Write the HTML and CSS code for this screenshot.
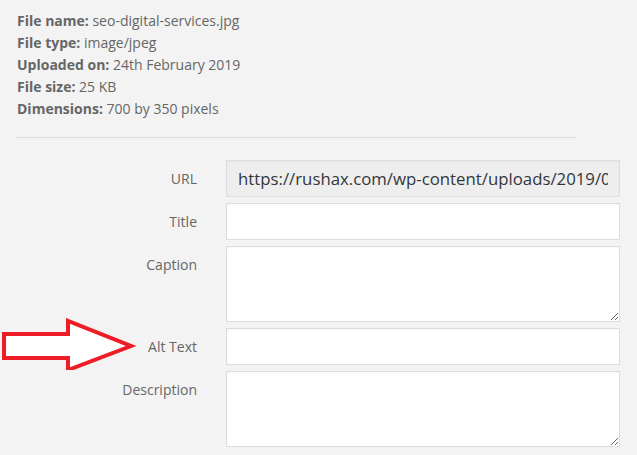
FILE: index.html
```html
<!DOCTYPE html>
<html>
<head>
<meta charset="utf-8">
<link rel="stylesheet" href="styles.css">
</head>
<body>
<div class="page">
  <div class="info">
    <div class="line"><strong>File name:</strong> seo-digital-services.jpg</div>
    <div class="line"><strong>File type:</strong> image/jpeg</div>
    <div class="line"><strong>Uploaded on:</strong> 24th February 2019</div>
    <div class="line"><strong>File size:</strong> 25 KB</div>
    <div class="line"><strong>Dimensions:</strong> 700 by 350 pixels</div>
  </div>
  <div class="divider"></div>
  <div class="form">
    <label class="label">URL</label>
    <input class="field readonly" type="text" readonly value="https://rushax.com/wp-content/uploads/2019/02/seo-digital-services.jpg">
    <label class="label">Title</label>
    <input class="field" type="text">
    <label class="label">Caption</label>
    <textarea class="field area"></textarea>
    <label class="label">Alt Text</label>
    <input class="field" type="text">
    <label class="label">Description</label>
    <textarea class="field area"></textarea>
  </div>
  <svg class="arrow" width="140" height="60" viewBox="0 310 140 60">
    <polygon points="4,334 68,334 68,321 131,346 68,370 68,358 4,358" fill="#ffffff" stroke="#ee1c25" stroke-width="4" stroke-linejoin="miter"/>
  </svg>
</div>
</body>
</html>
```
FILE: styles.css
```css
* { box-sizing: border-box; }
html, body {
  margin: 0;
  padding: 0;
  background: #f3f3f3;
}
.page {
  position: relative;
  width: 637px;
  height: 455px;
  overflow: hidden;
  font-family: "Open Sans", "Noto Sans", sans-serif;
  color: #666;
}
.info {
  padding: 10px 0 0 17px;
  font-size: 14px;
  line-height: 22px;
}
.info strong {
  font-weight: 700;
  color: #666;
}
.divider {
  margin: 17px 0 0 16px;
  width: 561px;
  border-top: 1px solid #dddddd;
}
.form {
  display: grid;
  grid-template-columns: 197px 394px;
  column-gap: 29px;
  row-gap: 6px;
  margin-top: 22px;
}
.label {
  text-align: right;
  font-size: 14px;
  line-height: 20px;
  padding-top: 9px;
  color: #666;
}
.field {
  display: block;
  width: 394px;
  height: 37px;
  margin: 0;
  border: 1px solid #dddddd;
  background: #ffffff;
  font-family: "Open Sans", "Noto Sans", sans-serif;
  font-size: 16.8px;
  color: #32373c;
  padding: 0 11px;
  outline: none;
  box-shadow: inset 0 1px 2px rgba(0,0,0,0.04);
}
.readonly {
  background: #eeeeee;
}
.area {
  height: 76px;
  resize: vertical;
}
.arrow {
  position: absolute;
  left: 0;
  top: 310px;
}
```
